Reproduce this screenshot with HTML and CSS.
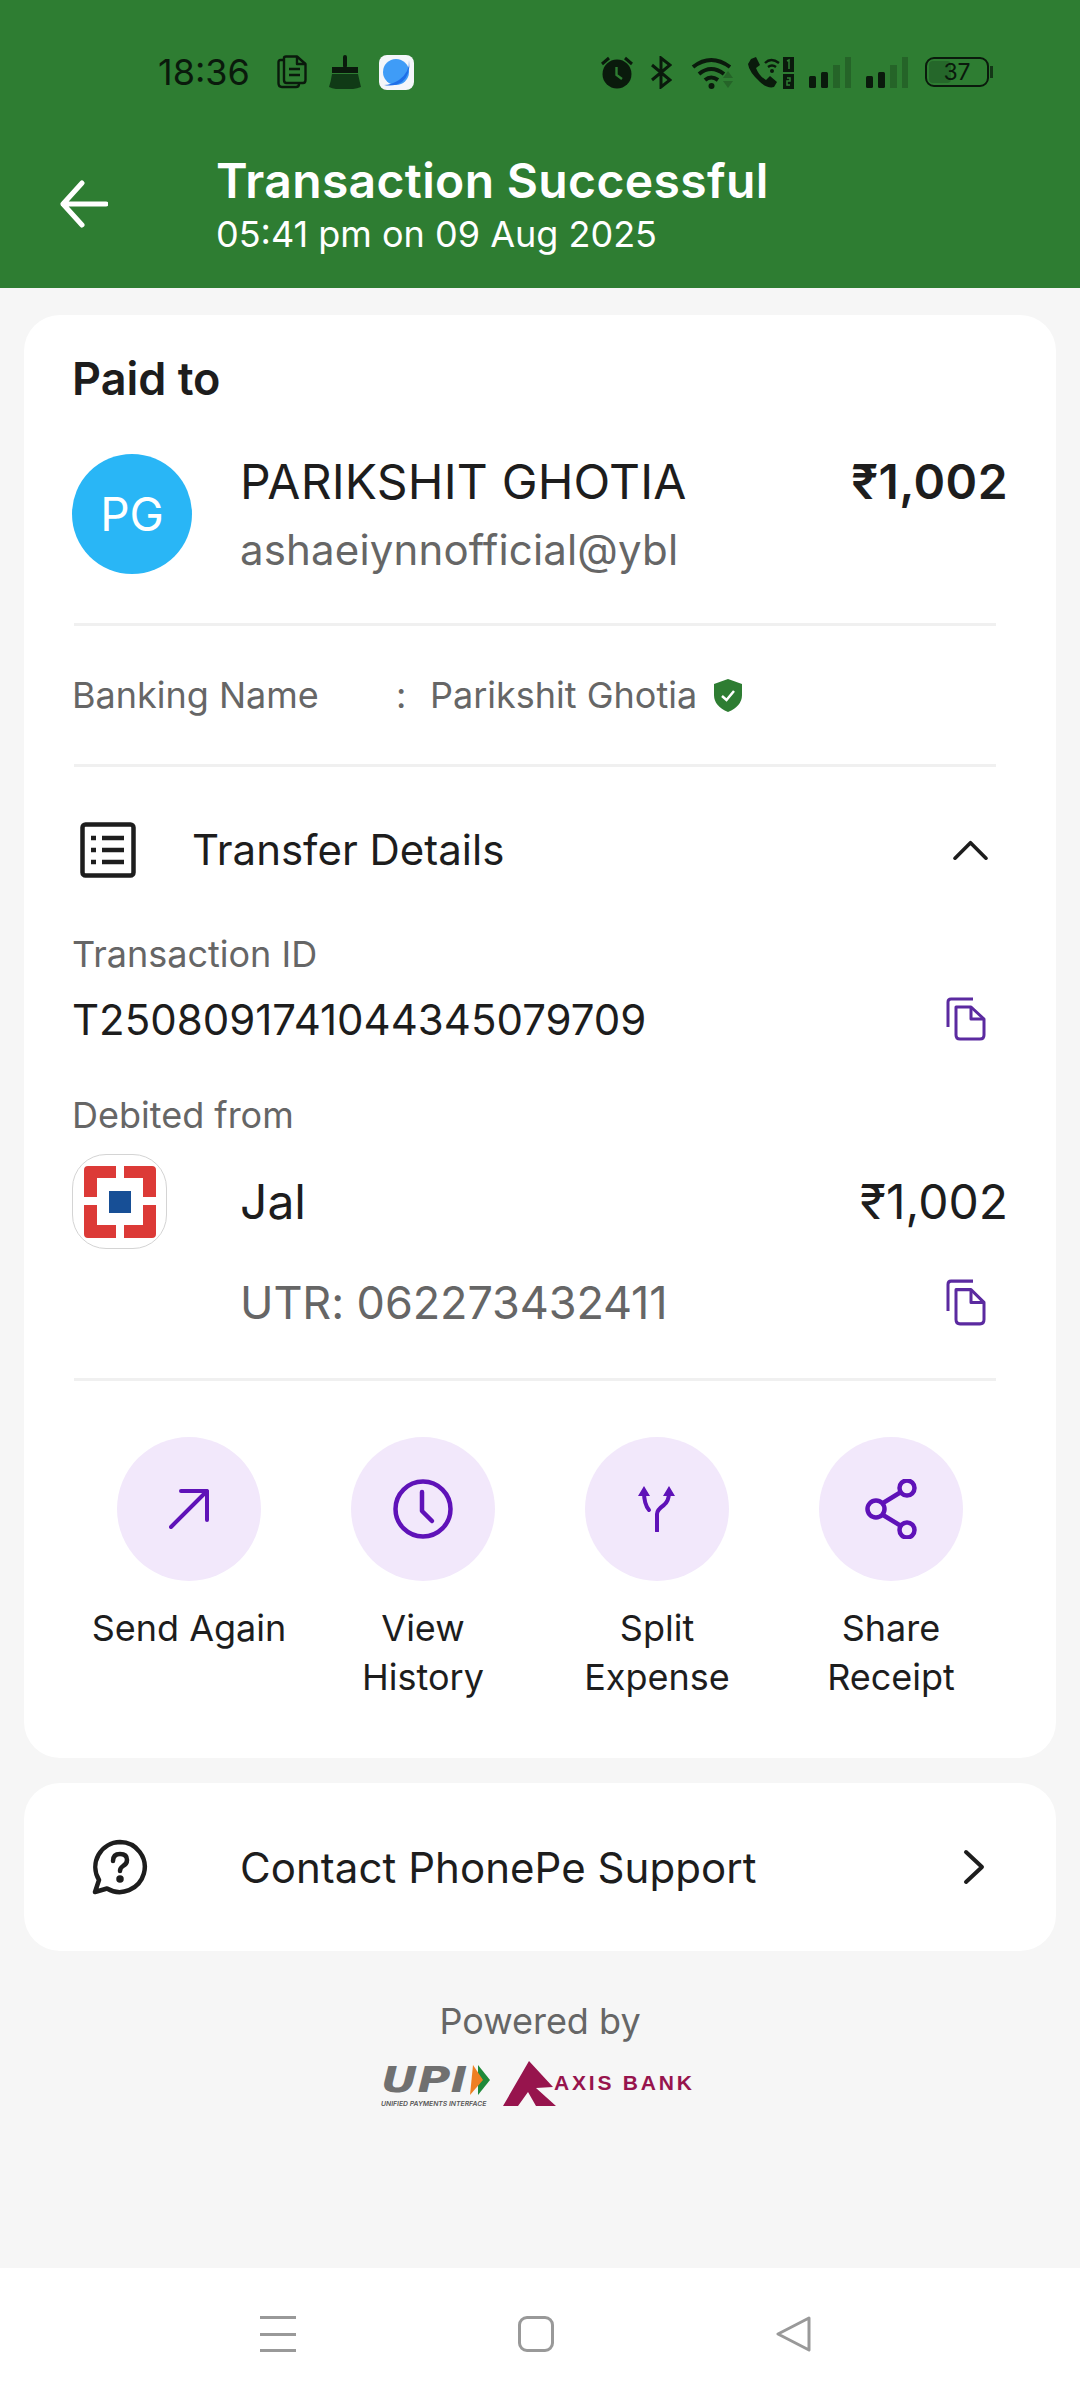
FILE: index.html
```html
<!DOCTYPE html>
<html lang="en">
<head>
    <meta charset="UTF-8">
    <meta name="viewport" content="width=device-width, initial-scale=1.0">
    <title>Transaction Successful</title>
    <link rel="stylesheet" href="styles.css">
</head>
<body>
    <header class="top">
        <div class="status-bar">
            <div class="status-left">
                <span class="clock">18:36</span>
                <svg class="ic-doc" width="30" height="34" viewBox="0 0 30 34" fill="none" stroke="#0a1a0c" stroke-width="2.4" stroke-linejoin="round"><path d="M7 5H3.5Q1.5 5 1.5 7V28Q1.5 32 5 32H19Q22 32 22 29"/><path d="M7 3Q7 1.5 9 1.5H20L28.5 9V25Q28.5 28 26 28H9.500Q7 28 7 25Z" fill="#2e7d32"/><path d="M20 1.500V9H28.500M12 14H23M12 20H23"/></svg>
                <svg class="ic-broom" width="32" height="34" viewBox="0 0 32 34"><rect x="14" y="0" width="4" height="13" rx="2" fill="#0a1a0c"/><rect x="3" y="12" width="26" height="6" fill="#0a1a0c"/><path d="M3 19H29Q31 28 32 32Q24 35 16 34Q6 35 0 32Q2 26 3 19Z" fill="#103a16"/></svg>
                <svg class="ic-app" width="35" height="35" viewBox="0 0 35 35"><rect width="35" height="35" rx="8" fill="#f4f6fa"/><circle cx="17" cy="17" r="13" fill="#3f9cf7"/><path d="M30 5Q31 17 20 25Q12 30 5 30Q15 32 23 27Q32 19 30 5Z" fill="#1f6fe8"/></svg>
            </div>
            <div class="status-right">
                <svg class="ic-alarm" width="32" height="33" viewBox="0 0 32 33" fill="none"><circle cx="16" cy="18" r="14.500" fill="#0a1a0c"/><path d="M15.500 11V19L21 23" stroke="#2e7d32" stroke-width="2.400"/><path d="M1 8L8 2M31 8L24 2" stroke="#0a1a0c" stroke-width="3"/></svg>
                <svg class="ic-bt" width="21" height="33" viewBox="0 0 21 33" fill="none" stroke="#0a1a0c" stroke-width="3"><path d="M1 9L19 24L10 31V2L19 9L1 24"/></svg>
                <svg class="ic-wifi" width="43" height="33" viewBox="0 0 43 33"><g fill="none" stroke="#0a1a0c" stroke-width="4"><path d="M2 11Q20 -3 39 11"/><path d="M8 18Q20 8 33 18"/><path d="M14 24Q20 19 27 24"/></g><circle cx="20.500" cy="30" r="3" fill="#0a1a0c"/><path d="M32 22L37 15L42 22ZM32 25H42L37 32Z" fill="#0a1a0c" opacity=".25"/></svg>
                <svg class="ic-call" width="49" height="33" viewBox="0 0 49 33"><path d="M5 3L10 1L14 9L10 12Q13 20 20 24L24 20L31 26L28 31Q22 33 14 26Q3 16 2 8Z" fill="#0a1a0c"/><g fill="none" stroke="#0a1a0c" stroke-width="2.400"><path d="M19 7Q25 1 33 7"/><path d="M22 11Q26 8 30 11"/></g><circle cx="26" cy="15" r="2" fill="#0a1a0c"/><rect x="37" y="1" width="11" height="15" fill="#0a1a0c"/><rect x="37" y="18" width="11" height="15" fill="#0a1a0c"/><path d="M41 5L43 4V13M41 22H44V25H41V29H44" fill="none" stroke="#2e7d32" stroke-width="1.500"/></svg>
                <svg class="ic-signal" width="43" height="31" viewBox="0 0 43 31" fill="#0a1a0c"><rect x="0" y="19" width="7" height="12" rx="1.500"/><rect x="12" y="15" width="7" height="16" rx="1.500"/><rect x="24" y="8" width="7" height="23" opacity=".25"/><rect x="36" y="0" width="6" height="31" opacity=".25"/></svg>
                <svg class="ic-signal" width="43" height="31" viewBox="0 0 43 31" fill="#0a1a0c"><rect x="0" y="19" width="7" height="12" rx="1.500"/><rect x="12" y="15" width="7" height="16" rx="1.500"/><rect x="24" y="8" width="7" height="23" opacity=".25"/><rect x="36" y="0" width="6" height="31" opacity=".25"/></svg>
                <div class="battery"><span class="battery-level"></span><span class="battery-text">37</span></div>
                <span class="battery-nub"></span>
            </div>
        </div>
        <div class="app-bar">
            <svg class="back" width="48" height="48" viewBox="0 0 48 48" fill="none" stroke="#fff" stroke-width="5" stroke-linecap="round" stroke-linejoin="round"><path d="M46 24H3M22 3L3 24L22 45"/></svg>
            <div class="app-title">
                <div class="title">Transaction Successful</div>
                <div class="subtitle">05:41 pm on 09 Aug 2025</div>
            </div>
        </div>
    </header>

    <main>
        <section class="card main-card">
            <div class="paid-title">Paid to</div>
            <div class="payee">
                <div class="avatar">PG</div>
                <div class="payee-info">
                    <div class="payee-name">PARIKSHIT GHOTIA</div>
                    <div class="payee-vpa">ashaeiynnofficial@ybl</div>
                </div>
                <div class="payee-amount">₹1,002</div>
            </div>
            <div class="divider"></div>
            <div class="banking">
                <span class="banking-label">Banking Name</span>
                <span class="banking-colon">:</span>
                <span class="banking-value">Parikshit Ghotia</span>
                <svg class="shield" width="30" height="33" viewBox="0 0 30 33"><path d="M15 0L29 5V16Q29 27 15 33Q1 27 1 16V5Z" fill="#2e7d32"/><path d="M9 17L13.500 21L21 12" fill="none" stroke="#fff" stroke-width="2.500"/></svg>
            </div>
            <div class="divider"></div>
            <div class="transfer-head">
                <svg class="ic-list" width="56" height="56" viewBox="0 0 56 56" fill="none" stroke="#1d1d1d" stroke-width="4.500"><rect x="2.500" y="2.500" width="51" height="51" rx="3"/><path d="M22 16H44M22 28H44M22 40H44"/><path d="M11 16H16M11 28H16M11 40H16"/></svg>
                <span class="transfer-title">Transfer Details</span>
                <svg class="chevron" width="35" height="20" viewBox="0 0 38 22" fill="none" stroke="#1d1d1d" stroke-width="4" stroke-linecap="round" stroke-linejoin="round"><path d="M2 20L19 3L36 20"/></svg>
            </div>
            <div class="label">Transaction ID</div>
            <div class="copy-row">
                <span class="txn-id">T2508091741044345079709</span>
                <svg class="ic-copy" width="40" height="44" viewBox="0 0 40 44" fill="none" stroke="#5b2aa0" stroke-width="3" stroke-linejoin="round"><path d="M27 2H5Q2 2 2 5V30"/><path d="M10 10H25L38 22V38Q38 42 34 42H14Q10 42 10 38Z"/><path d="M25 10V22H38"/></svg>
            </div>
            <div class="label debited">Debited from</div>
            <div class="bank-row">
                <div class="bank-logo">
                    <svg width="72" height="72" viewBox="0 0 72 72" fill="#dc3a37"><path d="M4 0H32V12H13V31H0V4Q0 0 4 0Z"/><path d="M40 0H68Q72 0 72 4V31H59V12H40Z"/><path d="M0 39H13V59H32V72H4Q0 72 0 68Z"/><path d="M59 39H72V68Q72 72 68 72H40V59H59Z"/><rect x="25" y="25" width="22" height="22" fill="#174f96"/></svg>
                </div>
                <span class="bank-name">Jal</span>
                <span class="bank-amount">₹1,002</span>
            </div>
            <div class="utr-row">
                <span class="utr">UTR: 062273432411</span>
                <svg class="ic-copy" width="40" height="47" viewBox="0 0 40 44" preserveAspectRatio="none" fill="none" stroke="#5b2aa0" stroke-width="3" stroke-linejoin="round"><path d="M27 2H5Q2 2 2 5V30"/><path d="M10 10H25L38 22V38Q38 42 34 42H14Q10 42 10 38Z"/><path d="M25 10V22H38"/></svg>
            </div>
            <div class="divider last"></div>
            <div class="actions">
                <div class="action">
                    <div class="action-circle"><svg width="40" height="40" viewBox="0 0 40 40" fill="none" stroke="#5f12b8" stroke-width="4" stroke-linecap="round" stroke-linejoin="round"><path d="M12 2H38V31M38 2L2 38"/></svg></div>
                    <div class="action-label">Send Again</div>
                </div>
                <div class="action">
                    <div class="action-circle"><svg width="60" height="60" viewBox="0 0 60 60" fill="none" stroke="#5f12b8" stroke-width="4.500" stroke-linecap="round" stroke-linejoin="round"><circle cx="30" cy="30" r="27.500"/><path d="M29 13V32L39 42"/></svg></div>
                    <div class="action-label">View History</div>
                </div>
                <div class="action">
                    <div class="action-circle"><svg width="40" height="46" viewBox="0 0 40 46" fill="none" stroke="#5f12b8" stroke-width="4" stroke-linecap="round"><path d="M20 45V28Q20 24 27 19Q32 15 32 6"/><path d="M12 24Q7 18 7 6"/><path d="M1 10L7 0L13 10ZM26 10L32 0L38 10Z" fill="#5f12b8" stroke="none"/></svg></div>
                    <div class="action-label">Split Expense</div>
                </div>
                <div class="action">
                    <div class="action-circle"><svg width="52" height="60" viewBox="0 0 52 60" fill="none" stroke="#5f12b8" stroke-width="4.500"><circle cx="11" cy="30" r="8.500"/><circle cx="42" cy="9" r="7.500"/><circle cx="42" cy="51" r="7.500"/><path d="M18 24L36 13M18 36L36 47"/></svg></div>
                    <div class="action-label">Share Receipt</div>
                </div>
            </div>
        </section>

        <section class="card support">
            <svg class="ic-help" width="56" height="56" viewBox="0 0 56 56" fill="none" stroke="#1d1d1d" stroke-width="4.500" stroke-linecap="round" stroke-linejoin="round"><path d="M28 3A25 25 0 1 1 15 49.500L3 53L7 41A25 25 0 0 1 28 3Z"/><path d="M21 22Q21 15 28 15Q35 15 35 21Q35 25 31 27Q28 29 28 32"/><circle cx="28" cy="40" r="1.500" fill="#1d1d1d"/></svg>
            <span class="support-text">Contact PhonePe Support</span>
            <svg class="support-arrow" width="24" height="36" viewBox="0 0 24 36" fill="none" stroke="#1d1d1d" stroke-width="4" stroke-linecap="round" stroke-linejoin="round"><path d="M4 3L20 18L4 33"/></svg>
        </section>

        <footer class="powered">
            <div class="powered-text">Powered by</div>
            <div class="logos">
                <div class="upi">
                    <div class="upi-top">
                        <span class="upi-word">UPI</span>
                        <svg width="20" height="30" viewBox="0 0 20 30"><path d="M8 0L20 15L8 30Z" fill="#1f8a3a"/><path d="M3 0L13 15L0 30Z" fill="#ee7f22"/></svg>
                    </div>
                    <div class="upi-sub">UNIFIED PAYMENTS INTERFACE</div>
                </div>
                <div class="axis">
                    <svg width="54" height="46" viewBox="0 0 54 46" fill="#97144d"><path d="M0 45L26 0L50 26L33 27L53 45H33L25 31L15 45Z"/></svg>
                    <span class="axis-word">AXIS BANK</span>
                </div>
            </div>
        </footer>
    </main>

    <nav class="nav-bar">
        <div class="nav-menu"><span></span><span></span><span></span></div>
        <div class="nav-home"></div>
        <svg width="36" height="36" viewBox="0 0 36 36" fill="none" stroke="#999" stroke-width="3" stroke-linejoin="round"><path d="M33 2L2 18L33 34Z"/></svg>
    </nav>
</body>
</html>
```

FILE: styles.css
```css
* {
    margin: 0;
    padding: 0;
    box-sizing: border-box;
}

body {
    width: 1080px;
    height: 2400px;
    display: flex;
    flex-direction: column;
    background: #f6f6f6;
    font-family: Inter, "Noto Sans", sans-serif;
    color: #1d1d1d;
    overflow: hidden;
}

svg {
    display: block;
    flex-shrink: 0;
}

/* header */
.top {
    height: 288px;
    background: #2e7d32;
}

.status-bar {
    height: 144px;
    padding: 54px 87px 0 158px;
    display: flex;
    justify-content: space-between;
    align-items: flex-start;
    color: #0a1a0c;
}

.status-left,
.status-right {
    display: flex;
    align-items: center;
    height: 36px;
}

.clock {
    font-size: 36px;
    width: 119px;
    line-height: 36px;
}

.ic-broom { margin-left: 22px; }
.ic-app { margin-left: 18px; }
.ic-bt { margin-left: 18px; }
.ic-wifi { margin-left: 19px; }
.ic-call { margin-left: 12px; }
.ic-signal { margin-left: 14px; }
.ic-signal + .ic-signal { margin-left: 14px; }

.battery {
    margin-left: 16px;
    width: 64px;
    height: 30px;
    border: 2.5px solid #0a1a0c;
    border-radius: 9px;
    display: flex;
    align-items: center;
    justify-content: center;
    overflow: hidden;
    position: relative;
}

.battery-level {
    position: absolute;
    left: 2px;
    top: 2px;
    bottom: 2px;
    width: 22px;
    border-radius: 4px;
    background: rgba(10, 26, 12, 0.22);
}

.battery-text {
    font-size: 23px;
    font-weight: 400;
    position: relative;
}

.battery-nub {
    width: 3px;
    height: 12px;
    margin-left: 1px;
    background: #0a1a0c;
    opacity: 0.7;
}

.app-bar {
    display: flex;
    align-items: flex-start;
    padding-left: 60px;
    color: #fff;
}

.back {
    margin-top: 36px;
}

.app-title {
    margin-left: 108px;
}

.title {
    font-size: 48px;
    font-weight: 600;
    line-height: 58px;
    letter-spacing: 0.35px;
    margin-top: 8px;
}

.subtitle {
    font-size: 36px;
    line-height: 44px;
    margin-top: 2px;
}

/* cards */
main {
    flex: 1;
    padding: 27px 24px 0;
}

.card {
    background: #fff;
    border-radius: 36px;
}

.main-card {
    height: 1443px;
    padding: 40px 48px 0;
}

.paid-title {
    font-size: 45px;
    font-weight: 600;
    line-height: 48px;
}

.payee {
    display: flex;
    height: 120px;
    margin-top: 51px;
}

.avatar {
    width: 120px;
    height: 120px;
    border-radius: 50%;
    background: #29b6f6;
    color: #fff;
    font-size: 46px;
    display: flex;
    align-items: center;
    justify-content: center;
}

.payee-info {
    margin-left: 48px;
    flex: 1;
}

.payee-name {
    font-size: 48px;
    line-height: 56px;
    letter-spacing: 0.2px;
}

.payee-vpa {
    font-size: 42px;
    line-height: 56px;
    margin-top: 12px;
    letter-spacing: 0.15px;
    color: #666;
}

.payee-amount {
    font-size: 48px;
    font-weight: 600;
    line-height: 56px;
    letter-spacing: 0.4px;
}

.divider {
    height: 3px;
    margin: 49px 12px 0 2px;
    background: #f0f0f0;
}

.banking {
    height: 138px;
    display: flex;
    align-items: center;
    font-size: 36px;
    color: #666;
}

.banking + .divider {
    margin-top: 0;
}

.banking-label {
    width: 324px;
}

.banking-colon {
    width: 34px;
}

.shield {
    margin-left: 16px;
}

.transfer-head {
    height: 165px;
    display: flex;
    align-items: center;
    padding: 0 20px 0 8px;
}

.transfer-title {
    font-size: 42px;
    margin-left: 56px;
    flex: 1;
}

.label {
    font-size: 36px;
    line-height: 44px;
    color: #666;
}

.copy-row {
    display: flex;
    justify-content: space-between;
    align-items: center;
    height: 44px;
    margin-top: 21px;
    padding-right: 22px;
}

.txn-id {
    font-size: 42px;
}

.debited {
    margin-top: 52px;
}

.bank-row {
    display: flex;
    align-items: center;
    margin-top: 17px;
    height: 95px;
}

.bank-logo {
    width: 95px;
    height: 95px;
    border: 1.5px solid #d4d4d4;
    border-radius: 34px;
    display: flex;
    align-items: center;
    justify-content: center;
}

.bank-name {
    font-size: 48px;
    margin-left: 73px;
    flex: 1;
}

.bank-amount {
    font-size: 48px;
}

.utr-row {
    display: flex;
    justify-content: space-between;
    align-items: center;
    height: 47px;
    margin-top: 30px;
    padding: 0 22px 0 168px;
}

.utr {
    font-size: 45px;
    letter-spacing: -0.1px;
    color: #666;
}

.divider.last {
    margin-top: 52px;
}

.actions {
    display: grid;
    grid-template-columns: repeat(4, 234px);
    margin-top: 56px;
}

.action {
    display: flex;
    flex-direction: column;
    align-items: center;
}

.action-circle {
    width: 144px;
    height: 144px;
    border-radius: 50%;
    background: #f2e8fb;
    display: flex;
    align-items: center;
    justify-content: center;
}

.action-label {
    width: 200px;
    margin-top: 23px;
    font-size: 36px;
    line-height: 49px;
    text-align: center;
}

.support {
    height: 168px;
    margin-top: 25px;
    display: flex;
    align-items: center;
    padding: 0 70px 0 68px;
}

.support-text {
    font-size: 42px;
    letter-spacing: 0.05px;
    margin-left: 92px;
    flex: 1;
}

/* footer */
.powered {
    margin-top: 46px;
}

.powered-text {
    font-size: 36px;
    line-height: 48px;
    text-align: center;
    color: #666;
}

.logos {
    display: flex;
    align-items: flex-start;
    margin-top: 16px;
    padding-left: 357px;
}

.upi {
    width: 122px;
    margin-top: 4px;
}

.upi-top {
    display: flex;
    align-items: center;
    height: 30px;
}

.upi-word {
    font-family: "DejaVu Sans", sans-serif;
    font-size: 36px;
    font-weight: 700;
    font-style: italic;
    line-height: 30px;
    color: #707070;
    width: 89px;
    transform: scaleX(1.25);
    transform-origin: left center;
}

.upi-sub {
    font-size: 6.800px;
    font-weight: 600;
    font-style: italic;
    color: #555;
    margin-top: 4px;
    white-space: nowrap;
}

.axis {
    display: flex;
    align-items: flex-start;
}

.axis-word {
    font-family: "Liberation Sans", sans-serif;
    font-size: 21px;
    font-weight: 700;
    letter-spacing: 2.800px;
    color: #97144d;
    line-height: 24px;
    margin-top: 10px;
    margin-left: -3px;
    white-space: nowrap;
}

/* nav */
.nav-bar {
    height: 132px;
    background: #fff;
    display: flex;
    align-items: center;
    padding: 0 268px 0 260px;
    justify-content: space-between;
}

.nav-menu {
    width: 36px;
    height: 36px;
    display: flex;
    flex-direction: column;
    justify-content: space-between;
}

.nav-menu span {
    height: 3px;
    background: #999;
}

.nav-home {
    width: 36px;
    height: 36px;
    border: 3px solid #999;
    border-radius: 9px;
}
```
